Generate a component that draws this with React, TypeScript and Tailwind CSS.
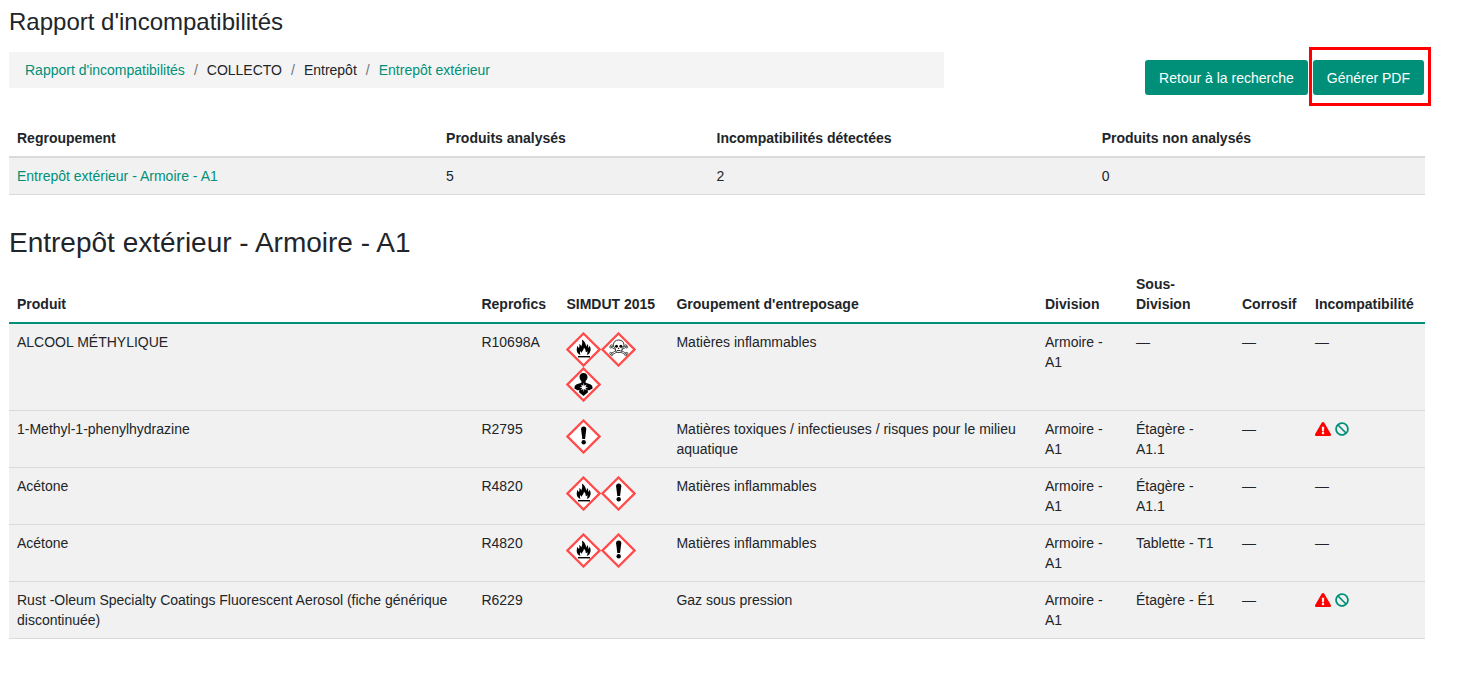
import type { ReactNode } from 'react'
import { FaBan, FaExclamationTriangle } from 'react-icons/fa'

type Hazard = 'flame' | 'skull' | 'health' | 'exclamation'

type Product = {
  name: string
  code: string
  hazards: Hazard[]
  group: string
  division: string
  subDivision: string
  incompatible: boolean
}

const products: Product[] = [
  { name: 'ALCOOL MÉTHYLIQUE', code: 'R10698A', hazards: ['flame', 'skull', 'health'], group: 'Matières inflammables', division: 'Armoire - A1', subDivision: '—', incompatible: false },
  { name: '1-Methyl-1-phenylhydrazine', code: 'R2795', hazards: ['exclamation'], group: 'Matières toxiques / infectieuses / risques pour le milieu aquatique', division: 'Armoire - A1', subDivision: 'Étagère - A1.1', incompatible: true },
  { name: 'Acétone', code: 'R4820', hazards: ['flame', 'exclamation'], group: 'Matières inflammables', division: 'Armoire - A1', subDivision: 'Étagère - A1.1', incompatible: false },
  { name: 'Acétone', code: 'R4820', hazards: ['flame', 'exclamation'], group: 'Matières inflammables', division: 'Armoire - A1', subDivision: 'Tablette - T1', incompatible: false },
  { name: 'Rust -Oleum Specialty Coatings Fluorescent Aerosol (fiche générique discontinuée)', code: 'R6229', hazards: [], group: 'Gaz sous pression', division: 'Armoire - A1', subDivision: 'Étagère - É1', incompatible: true },
]

const hazardLabels: Record<Hazard, string> = {
  flame: 'Inflammable',
  skull: 'Toxicité aiguë',
  health: 'Danger pour la santé',
  exclamation: 'Danger',
}

const hazardShapes: Record<Hazard, ReactNode> = {
  flame: (
    <>
      <path d="M14.600 23c-2.300-.8-3.900-2.600-3.900-5.100 0-1.400.5-2.300.3-4 1 .5 1.600 1.300 1.800 2.400.8-1.100.8-2.500.3-4.200 1.200.5 1.800 1.300 2 2.300 1.100-2 1.600-4.200.7-7 2.700 1.600 4.200 4 4.300 7.200.8-.7 1-1.600.8-2.800 1.200 1.100 1.600 2.500 1.300 4.100.8-.4 1.200-1.200 1.200-2.400 1.200 1.600 1.500 3.200 1.100 4.900-.4 2.300-1.700 3.900-3.900 4.600.9-1.200 1.100-2.700.6-4.100-.3.700-.8 1.200-1.500 1.400.2-1.700-.4-3.300-1.800-4.800 0 1.400-.4 2.400-1.200 3.300-.6.700-.8 1.200-.8 1.900-.8-.3-1.200-.8-1.300-1.600-.9 1.300-.9 2.800 0 3.900z" />
      <path d="M12 24h12v1.400H12z" />
    </>
  ),
  skull: (
    <>
      <g fill="none" strokeLinecap="round">
        <path d="M10.500 14.500l14.500 7.500M25 14.500l-14.500 7.500" stroke="#333" strokeWidth="2.400" />
        <path d="M10.500 14.500l14.500 7.500M25 14.500l-14.500 7.500" stroke="#fff" strokeWidth="1" />
      </g>
      <g fill="#fff" stroke="#333" strokeWidth=".8">
        <circle cx="9.700" cy="15.100" r="1" /><circle cx="10.700" cy="13.700" r="1" />
        <circle cx="25.800" cy="15.100" r="1" /><circle cx="24.800" cy="13.700" r="1" />
        <circle cx="9.700" cy="21.400" r="1" /><circle cx="10.800" cy="22.700" r="1" />
        <circle cx="25.800" cy="21.400" r="1" /><circle cx="24.700" cy="22.700" r="1" />
      </g>
      <path d="M17.700 8c-3.300 0-5.200 2-5.200 4.700 0 1.600.5 2.800 1.700 3.600l.4 2.800 1.600 1.300h3l1.600-1.300.4-2.800c1.200-.8 1.700-2 1.700-3.600 0-2.700-1.900-4.700-5.200-4.700z" fill="#fff" stroke="#333" strokeWidth="1" />
      <circle cx="15.500" cy="14.200" r="1.500" />
      <circle cx="19.900" cy="14.200" r="1.500" />
      <path d="M17.700 15.600l.9 1.500h-1.800zM15.800 18.200h3.800v.9h-3.800z" />
    </>
  ),
  health: (
    <>
      <path d="M17.500 6c2.600 0 4 1.700 4 4 0 1.700-.8 3.100-1.900 4v1.700l4.600 1.500c1.700.7 2.400 2 2.400 4.400l-3.700 1.800-1.300-1 .4 2.800-4.500 3.800-4.500-3.800.4-2.800-1.300 1-3.700-1.800c0-2.400.7-3.700 2.400-4.400l4.600-1.500V14c-1.100-.9-1.900-2.300-1.900-4 0-2.300 1.400-4 4-4z" />
      <path d="M17.800 15.800l.6 3 2.300-1.300-1.200 2.200 2.800.6-2.800.6 1.200 2.300-2.300-1.300-.6 3-.6-3-2.300 1.300 1.200-2.300-2.800-.6 2.800-.6-1.200-2.200 2.300 1.300z" fill="#fff" />
    </>
  ),
  exclamation: (
    <>
      <path d="M17.700 7.500c1.800 0 2.700 1.100 2.600 2.800L19.100 20h-2.800l-1.200-9.700c-.1-1.700.8-2.800 2.600-2.800z" />
      <circle cx="17.700" cy="23.300" r="2.200" />
    </>
  ),
}

function Pictogram({ hazard }: { hazard: Hazard }) {
  return (
    <svg viewBox="0 0 35 35" className="size-[35px]" role="img" aria-label={hazardLabels[hazard]}>
      <path d="M17.500 1.500l16 16-16 16-16-16z" fill="#fff" stroke="#ff4b4b" strokeWidth="2.300" />
      {hazardShapes[hazard]}
    </svg>
  )
}

export default function App() {
  return (
    <div className="bg-white pt-2 pr-[49px] pb-12 pl-[9px] font-['Liberation_Sans',Arial,sans-serif] text-sm leading-5 text-[#212529]">
      <h1 className="text-2xl leading-7">Rapport d'incompatibilités</h1>

      <div className="mt-4 flex items-start justify-between">
        <nav aria-label="Fil d'Ariane" className="w-[66%] bg-[#f4f4f4] px-4 py-2">
          <ol className="flex flex-wrap gap-[9px]">
            <li><a href="#" className="text-[#009079]">Rapport d'incompatibilités</a></li>
            <li className="text-[#6c757d]">/</li>
            <li>COLLECTO</li>
            <li className="text-[#6c757d]">/</li>
            <li>Entrepôt</li>
            <li className="text-[#6c757d]">/</li>
            <li><a href="#" className="text-[#009079]">Entrepôt extérieur</a></li>
          </ol>
        </nav>
        <div className="mt-2 flex gap-[5px] pr-px">
          <button type="button" className="h-[35px] rounded-[3px] bg-[#009079] px-3.5 text-white">Retour à la recherche</button>
          <div className="relative">
            <button type="button" className="h-[35px] rounded-[3px] bg-[#009079] px-3.5 text-white">Générer PDF</button>
            <span className="pointer-events-none absolute -top-[13px] -right-[7px] -bottom-[11px] -left-1 border-3 border-[#ff0000]" />
          </div>
        </div>
      </div>

      <table className="mt-[25px] w-full table-fixed text-left">
        <thead>
          <tr className="border-b-2 border-[#dadada]">
            <th className="w-[30.3%] p-2">Regroupement</th>
            <th className="w-[19.1%] p-2">Produits analysés</th>
            <th className="w-[27.2%] p-2">Incompatibilités détectées</th>
            <th className="p-2">Produits non analysés</th>
          </tr>
        </thead>
        <tbody>
          <tr className="border-b border-[#dadada] bg-[#f1f1f1]">
            <td className="p-2"><a href="#" className="text-[#009079]">Entrepôt extérieur - Armoire - A1</a></td>
            <td className="p-2">5</td>
            <td className="p-2">2</td>
            <td className="p-2">0</td>
          </tr>
        </tbody>
      </table>

      <h2 className="mt-8 text-[28px] leading-8">Entrepôt extérieur - Armoire - A1</h2>

      <table className="mt-[7px] w-full table-fixed text-left">
        <thead>
          <tr className="border-b-2 border-[#009079] align-bottom">
            <th className="w-[32.8%] p-2">Produit</th>
            <th className="w-[85px] p-2">Reprofics</th>
            <th className="w-[110px] p-2">SIMDUT 2015</th>
            <th className="p-2">Groupement d'entreposage</th>
            <th className="w-[91px] p-2">Division</th>
            <th className="w-[106px] p-2">Sous-<br />Division</th>
            <th className="w-[73px] p-2">Corrosif</th>
            <th className="w-[118px] p-2">Incompatibilité</th>
          </tr>
        </thead>
        <tbody>
          {products.map((product, i) => (
            <tr key={i} className="border-b border-[#dadada] bg-[#f1f1f1] align-top">
              <td className="p-2">{product.name}</td>
              <td className="p-2">{product.code}</td>
              <td className="p-2">
                <div className="flex flex-wrap">
                  {product.hazards.map((hazard) => <Pictogram key={hazard} hazard={hazard} />)}
                </div>
              </td>
              <td className="p-2">{product.group}</td>
              <td className="p-2">{product.division}</td>
              <td className="py-2 pr-4 pl-2">{product.subDivision}</td>
              <td className="p-2">—</td>
              <td className="p-2">
                {product.incompatible ? (
                  <div className="flex h-5 items-center gap-1">
                    <FaExclamationTriangle className="size-4 text-[#ff0000]" />
                    <FaBan className="size-3.5 text-[#009079]" />
                  </div>
                ) : '—'}
              </td>
            </tr>
          ))}
        </tbody>
      </table>
    </div>
  )
}
